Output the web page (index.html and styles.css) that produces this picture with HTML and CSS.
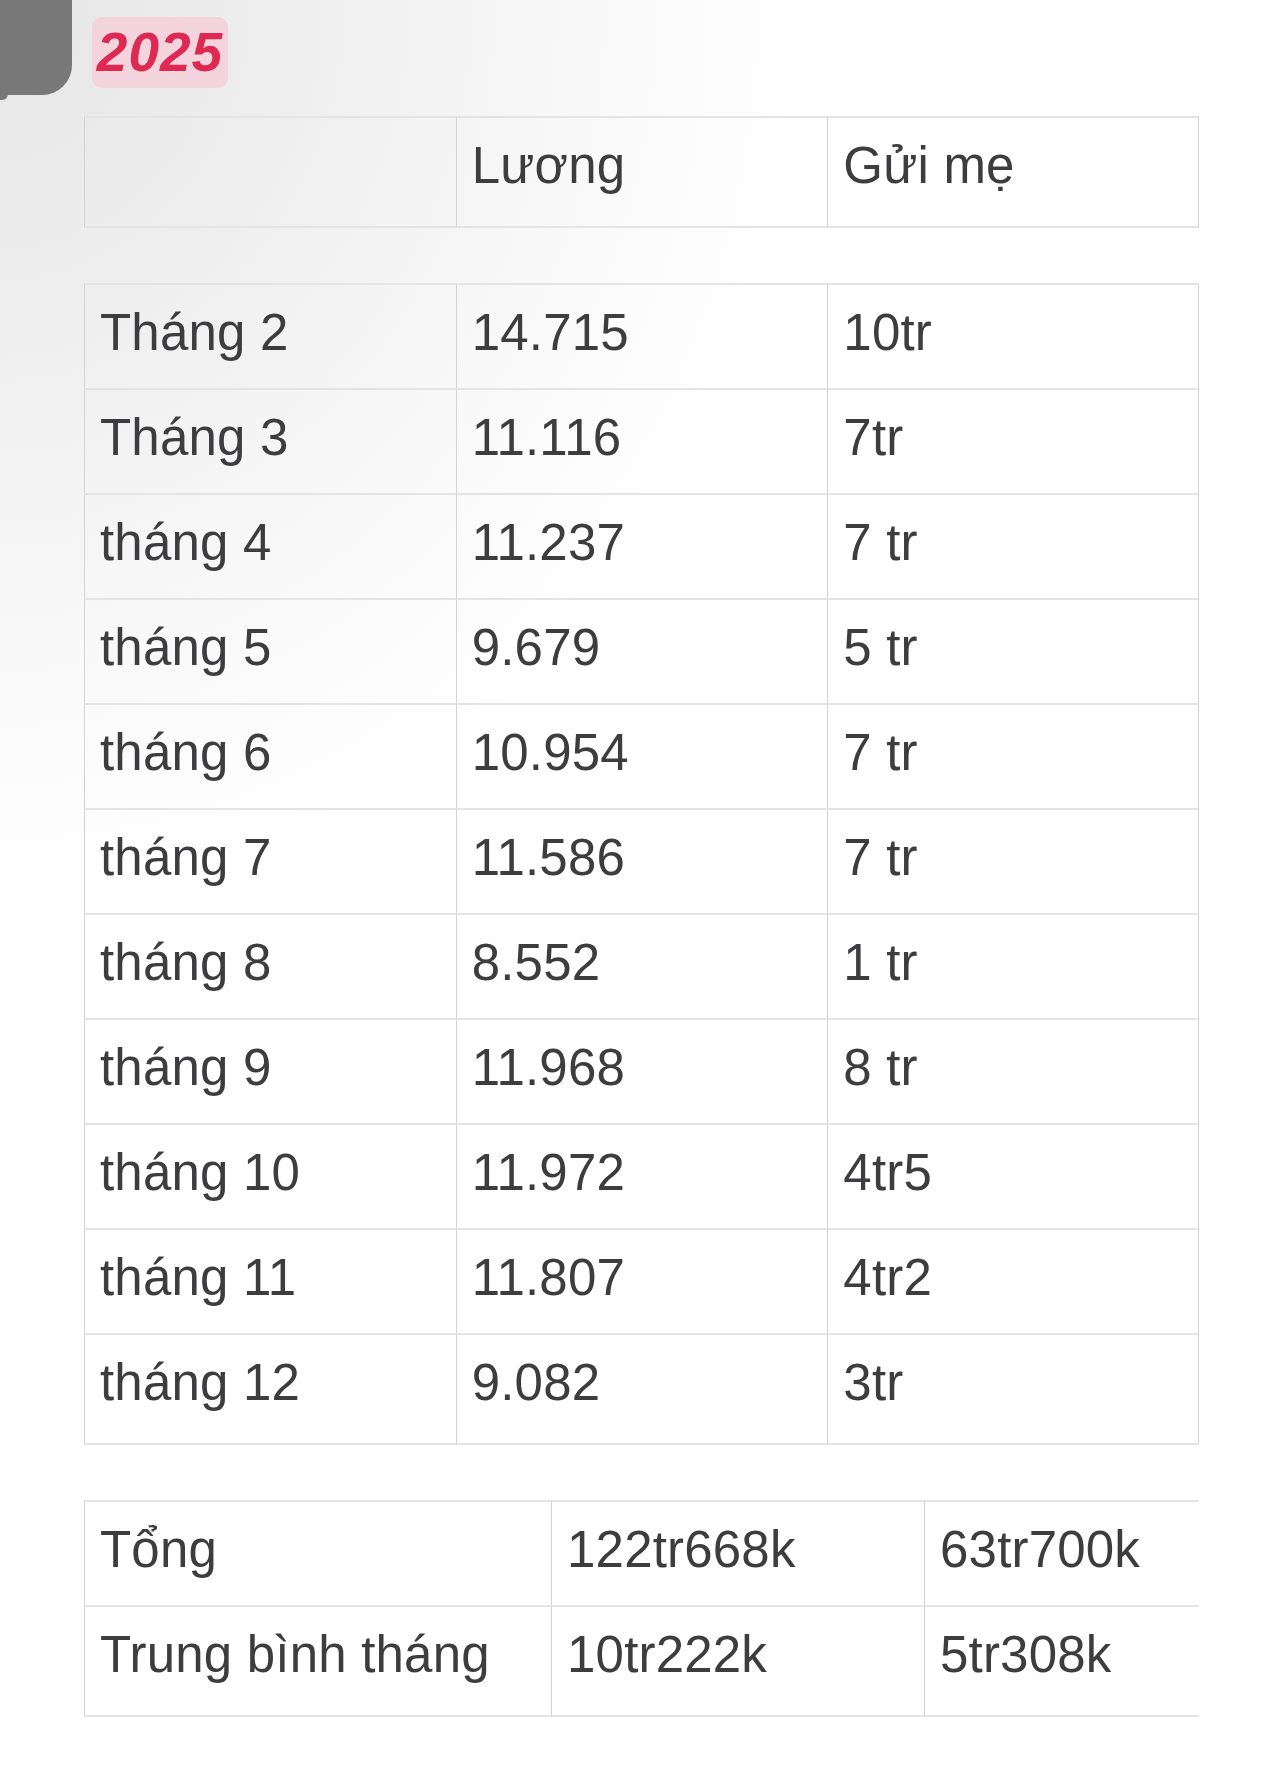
FILE: index.html
```html
<!DOCTYPE html>
<html lang="vi">
<head>
<meta charset="utf-8">
<title>2025</title>
<link rel="stylesheet" href="styles.css">
</head>
<body>
<div class="corner"></div>
<main class="page">
  <div class="badge-row"><span class="badge">2025</span></div>

  <table class="grid">
    <tr><td></td><td>Lương</td><td>Gửi mẹ</td></tr>
  </table>

  <table class="grid">
    <tr><td>Tháng 2</td><td>14.715</td><td>10tr</td></tr>
    <tr><td>Tháng 3</td><td>11.116</td><td>7tr</td></tr>
    <tr><td>tháng 4</td><td>11.237</td><td>7 tr</td></tr>
    <tr><td>tháng 5</td><td>9.679</td><td>5 tr</td></tr>
    <tr><td>tháng 6</td><td>10.954</td><td>7 tr</td></tr>
    <tr><td>tháng 7</td><td>11.586</td><td>7 tr</td></tr>
    <tr><td>tháng 8</td><td>8.552</td><td>1 tr</td></tr>
    <tr><td>tháng 9</td><td>11.968</td><td>8 tr</td></tr>
    <tr><td>tháng 10</td><td>11.972</td><td>4tr5</td></tr>
    <tr><td>tháng 11</td><td>11.807</td><td>4tr2</td></tr>
    <tr><td>tháng 12</td><td>9.082</td><td>3tr</td></tr>
  </table>

  <div class="clip">
    <table class="grid wide">
      <colgroup><col class="c1"><col class="c2"><col class="c3"></colgroup>
      <tr><td>Tổng</td><td>122tr668k</td><td>63tr700k</td></tr>
      <tr><td>Trung bình tháng</td><td>10tr222k</td><td>5tr308k</td></tr>
    </table>
  </div>
</main>
</body>
</html>
```

FILE: styles.css
```css
html, body {
  margin: 0;
  padding: 0;
}
body {
  width: 1284px;
  min-height: 1776px;
  background:
    radial-gradient(ellipse 950px 1050px at 0 0, #e6e6e6 0%, #eeeeee 30%, #f8f8f8 60%, #ffffff 85%),
    #ffffff;
  font-family: "Liberation Sans", Arial, sans-serif;
  color: #3d3d3f;
  position: relative;
  overflow: hidden;
}
.corner {
  position: absolute;
  left: 0;
  top: 0;
  width: 72px;
  height: 95px;
  background: #787878;
  border-bottom-right-radius: 30px;
}
.corner::after {
  content: "";
  position: absolute;
  left: 0;
  bottom: -5px;
  width: 8px;
  height: 8px;
  background: #787878;
  border-bottom-right-radius: 6px;
}
.page {
  padding: 17px 85px 0 84px;
}
.badge-row {
  padding-left: 8px;
  height: 71px;
  margin-bottom: 28px;
}
.badge {
  display: inline-block;
  width: 136px;
  height: 71px;
  line-height: 71px;
  text-align: center;
  background: #f3d4dc;
  color: #de2a52;
  border-radius: 10px;
  font-size: 55px;
  font-weight: 700;
  font-style: italic;
  letter-spacing: 1px;
}
.grid {
  width: 1115px;
  table-layout: fixed;
  border-collapse: separate;
  border-spacing: 0;
  margin: 0 0 55px 0;
}
.grid td {
  border-top: 2px solid #e4e4e4;
  border-left: 1px solid #d3d3d3;
  padding: 19px 10px 26px 15px;
  font-size: 51px;
  line-height: 58px;
  letter-spacing: 0.2px;
  white-space: nowrap;
  vertical-align: top;
}
.grid td:last-child {
  border-right: 1px solid #d3d3d3;
}
.grid tr:last-child td {
  border-bottom: 2px solid #e4e4e4;
  padding-bottom: 31px;
}
.clip {
  width: 1115px;
  overflow: hidden;
}
.grid.wide {
  width: 1212px;
  margin: 0;
}
.c1 { width: 467px; }
.c2 { width: 373px; }
.c3 { width: 372px; }
```
